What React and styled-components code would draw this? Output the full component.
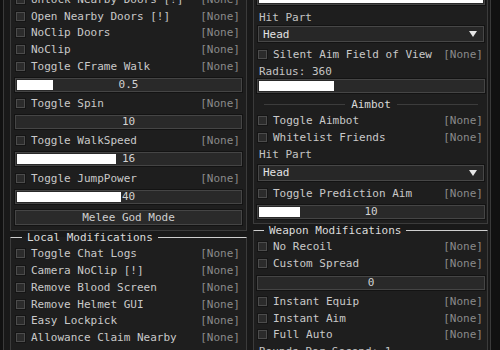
import styled, { createGlobalStyle } from "styled-components";

const GlobalStyle = createGlobalStyle`
body {
    margin: 0;
    background-color: #111111;
    font-family: "DejaVu Sans Mono", "Liberation Mono", monospace;
    font-size: 11px;
    color: #c9c9c9;
}
`

const leftTop = [
    "Unlock Nearby Doors [!]",
    "Open Nearby Doors [!]",
    "NoClip Doors",
    "NoClip",
    "Toggle CFrame Walk",
];

const localMods = [
    "Toggle Chat Logs",
    "Camera NoClip [!]",
    "Remove Blood Screen",
    "Remove Helmet GUI",
    "Easy Lockpick",
    "Allowance Claim Nearby",
];

const Toggle = ({ label, mt }) => (
    <Row mt={mt}>
        <Check />
        <RowText>{label}</RowText>
        <Bind>[None]</Bind>
    </Row>
);

const Slider = ({ value, fill, mt, mb }) => (
    <Track mt={mt} mb={mb}>
        <Fill style={{ width: `${fill}%` }} />
        <TrackValue>{value}</TrackValue>
    </Track>
);

const Dropdown = ({ value, mt }) => (
    <Select mt={mt}>
        <span>{value}</span>
        <svg width="8" height="6" viewBox="0 0 8 6">
            <polygon points="0,0 8,0 4,6" fill="#e6e6e6" />
        </svg>
    </Select>
);

const App = () => {
    return (
        <>
            <GlobalStyle />
            <Window>
                <Column>
                    <Box pb={5}>
                        {leftTop.map((e) => <Toggle key={e} label={e} />)}
                        <Slider value="0.5" fill={16} mt={3} mb={3.5} />
                        <Toggle label="Toggle Spin" />
                        <Slider value="10" fill={0} mt={3} mb={3.5} />
                        <Toggle label="Toggle WalkSpeed" />
                        <Slider value="16" fill={44} mt={3} mb={3.5} />
                        <Toggle label="Toggle JumpPower" />
                        <Slider value="40" fill={46} mt={3} mb={3.5} />
                        <Button>Melee God Mode</Button>
                    </Box>
                    <Group>
                        <Legend>Local Modifications</Legend>
                        {localMods.map((e) => <Toggle key={e} label={e} />)}
                    </Group>
                </Column>
                <Column right>
                    <Box right pb={4}>
                        <Slider value="" fill={100} mt={0} mb={0} />
                        <Label mt={4}>Hit Part</Label>
                        <Dropdown value="Head" mt={1} />
                        <Toggle label="Silent Aim Field of View" mt={4.5} />
                        <Label>Radius: 360</Label>
                        <Slider value="" fill={33} mt={0} mb={0} />
                        <SubHeader>
                            <SubLine />
                            <span>Aimbot</span>
                            <SubLine />
                        </SubHeader>
                        <Toggle label="Toggle Aimbot" />
                        <Toggle label="Whitelist Friends" />
                        <Label mt={1}>Hit Part</Label>
                        <Dropdown value="Head" mt={2} />
                        <Toggle label="Toggle Prediction Aim" mt={4} />
                        <Slider value="10" fill={18} mt={3} mb={0} />
                    </Box>
                    <Group right>
                        <Legend>Weapon Modifications</Legend>
                        <Toggle label="No Recoil" />
                        <Toggle label="Custom Spread" />
                        <Slider value="0" fill={0} mt={3.5} mb={3.5} />
                        <Toggle label="Instant Equip" />
                        <Toggle label="Instant Aim" />
                        <Toggle label="Full Auto" />
                        <Label>Rounds Per Second: 1</Label>
                    </Group>
                </Column>
            </Window>
        </>
    )
};

const Window = styled.div`
display: flex;
flex-direction: row;
gap: 6px;
width: 488px;
height: 350px;
box-sizing: border-box;
margin-left: 3px;
padding: 0 2px 0 6px;
border-left: 1px solid #3a3a3a;
border-right: 1px solid #3a3a3a;
background-color: #191919;
overflow: hidden;
`

const Column = styled.div`
display: flex;
flex-direction: column;
width: ${props => (props.right ? "235px" : "237px")};
flex-shrink: 0;
margin-top: -9px;
`

const Box = styled.div`
display: flex;
flex-direction: column;
box-sizing: border-box;
padding: 0 ${props => (props.right ? "3px" : "5px")} ${props => props.pb}px ${props => (props.right ? "4px" : "5px")};
border: 1px solid #3b3b3b;
border-top: none;
background-color: #1e1e1e;
`

const Group = styled.fieldset`
display: flex;
flex-direction: column;
min-width: 0;
margin: 0;
padding: 1px ${props => (props.right ? "3px" : "5px")} 5px ${props => (props.right ? "4px" : "5px")};
border: 1px solid #3b3b3b;
border-top-color: #cfcfcf;
background-color: #1e1e1e;
`

const Legend = styled.legend`
margin-left: 6px;
padding: 0 5px;
line-height: 14px;
font-size: 11px;
color: #dcdcdc;
`

const Row = styled.div`
display: flex;
flex-direction: row;
align-items: center;
height: 16.75px;
margin-top: ${props => props.mt || 0}px;
flex-shrink: 0;
`

const Check = styled.div`
width: 9px;
height: 9px;
box-sizing: border-box;
border: 1px solid #4c4c4c;
background-color: #2b2b2b;
box-shadow: 0 0 0 1px #151515;
flex-shrink: 0;
`

const RowText = styled.div`
margin-left: 6px;
color: #c9c9c9;
white-space: nowrap;
`

const Bind = styled.div`
margin-left: auto;
margin-right: 1px;
color: #8a8a8a;
`

const Track = styled.div`
position: relative;
display: flex;
justify-content: center;
align-items: center;
height: 14px;
box-sizing: border-box;
margin: ${props => props.mt}px -1px ${props => props.mb}px -1px;
border: 1px solid #454545;
background-color: #292929;
box-shadow: 0 0 0 1px #131313;
flex-shrink: 0;
`

const Fill = styled.div`
position: absolute;
left: 1px;
top: 1px;
bottom: 1px;
background-color: #ffffff;
max-width: calc(100% - 2px);
`

const TrackValue = styled.span`
position: relative;
color: #d2d2d2;
line-height: 12px;
`

const Button = styled.div`
display: flex;
justify-content: center;
align-items: center;
height: 15px;
box-sizing: border-box;
margin: 2.5px -1px 0 -1px;
border: 1px solid #454545;
background-color: #2a2a2a;
box-shadow: 0 0 0 1px #131313;
color: #cfcfcf;
`

const Label = styled.div`
display: flex;
align-items: center;
height: 16px;
margin-top: ${props => props.mt || 0}px;
margin-left: 1px;
color: #c4c4c4;
white-space: nowrap;
flex-shrink: 0;
`

const Select = styled.div`
display: flex;
justify-content: space-between;
align-items: center;
height: 16px;
box-sizing: border-box;
margin-top: ${props => props.mt}px;
padding: 0 6px 0 4px;
border: 1px solid #474747;
background-color: #272727;
box-shadow: 0 0 0 1px #131313;
color: #e2e2e2;
flex-shrink: 0;
`

const SubHeader = styled.div`
display: flex;
align-items: center;
gap: 6px;
height: 16px;
margin-top: 3px;
padding: 0 6px;
color: #dadada;
flex-shrink: 0;
`

const SubLine = styled.div`
flex: 1;
height: 1px;
background-color: #3c3c3c;
`

export default App;
